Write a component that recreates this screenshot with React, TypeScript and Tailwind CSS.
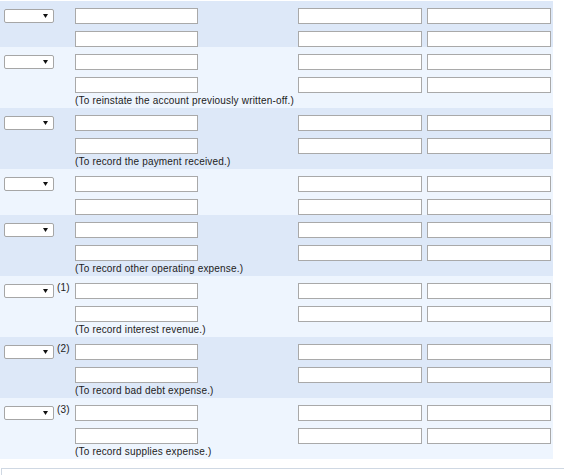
const blocks = [
  { tone: 'dark', label: '', note: '' },
  { tone: 'light', label: '', note: '(To reinstate the account previously written-off.)' },
  { tone: 'dark', label: '', note: '(To record the payment received.)' },
  { tone: 'light', label: '', note: '' },
  { tone: 'dark', label: '', note: '(To record other operating expense.)' },
  { tone: 'light', label: '(1)', note: '(To record interest revenue.)' },
  { tone: 'dark', label: '(2)', note: '(To record bad debt expense.)' },
  { tone: 'light', label: '(3)', note: '(To record supplies expense.)' },
]

const Field = ({ w }: { w: string }) => (
  <div className={`${w} h-[16px] border border-[#a9a9a9] bg-white`} />
)

const Select = () => (
  <div className="ml-[4px] mt-[1px] flex h-[14px] w-[50px] items-center justify-end rounded-[2px] border border-[#a6a6a6] bg-white pr-[5px]">
    <svg width="5" height="4" viewBox="0 0 5 4">
      <path d="M0 0h5L2.5 4z" fill="#111" />
    </svg>
  </div>
)

const Row = ({ first, label }: { first: boolean; label: string }) => (
  <div className="flex h-[16px] items-start">
    <div className="flex w-[75px] items-start">
      {first && <Select />}
      {first && label && (
        <span className="ml-[3px] -mt-[1px] text-[10px] leading-[12px] tracking-[0.15px] text-[#222]">{label}</span>
      )}
    </div>
    <Field w="w-[123px]" />
    <div className="w-[100px]" />
    <Field w="w-[124px]" />
    <div className="w-[5px]" />
    <Field w="w-[124px]" />
  </div>
)

export default function App() {
  return (
    <div
      className="h-[475px] w-[564px] overflow-hidden bg-white pt-[1px]"
      style={{ fontFamily: '"Liberation Sans", Arial, sans-serif' }}
    >
      <div className="w-[553px]">
        {blocks.map((b, i) => (
          <div
            key={i}
            className={`flex flex-col gap-[7px] pt-[7px] ${b.tone === 'dark' ? 'bg-[#dde8f8]' : 'bg-[#eef5fe]'}`}
          >
            <Row first label={b.label} />
            <div>
              <Row first={false} label="" />
              {b.note && (
                <div className="h-[15px] pl-[75px] pt-[2px] text-[10px] leading-[12px] tracking-[0.18px] text-[#222]">
                  {b.note}
                </div>
              )}
            </div>
          </div>
        ))}
      </div>
      <div className="ml-[1px] mt-[9px] h-[40px] w-[600px] border border-[#cfd8e3] bg-white" />
    </div>
  )
}
